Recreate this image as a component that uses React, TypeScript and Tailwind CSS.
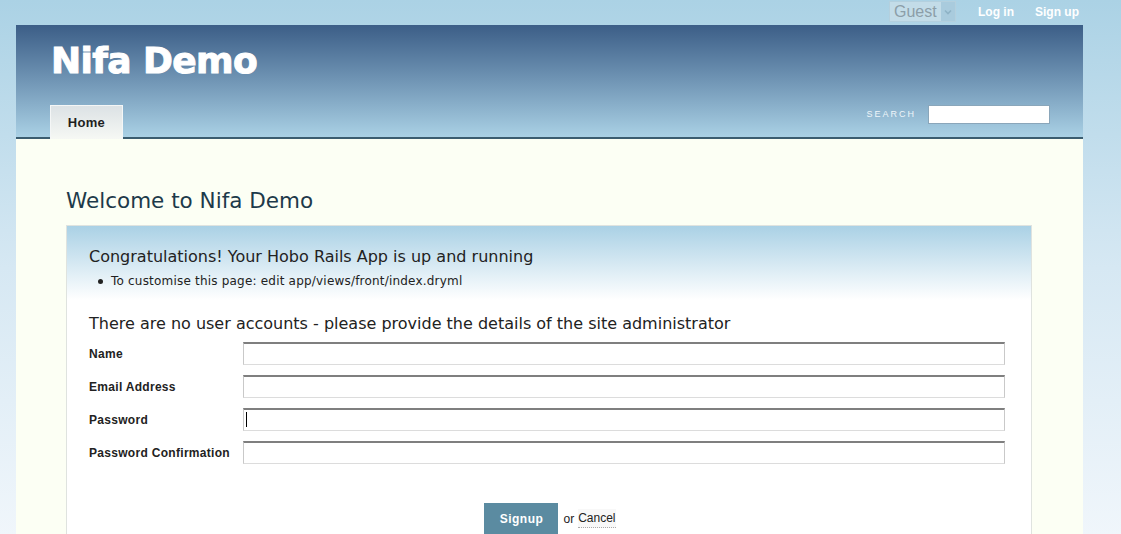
import React from "react";

const FIELDS = ["Name", "Email Address", "Password", "Password Confirmation"];

function Field({ label, focused }: { label: string; focused?: boolean }) {
  return (
    <div className="flex items-center h-[33px]">
      <label className="w-[154px] shrink-0 text-[12px] font-bold tracking-[0.3px] text-[#222]">{label}</label>
      <div className="relative flex-1 h-[23px] bg-white border border-[#c9c9c9] border-t-2 border-t-[#7f7f7f] border-b-[#dcdcdc]">
        {focused && <span className="absolute left-[2px] top-[2px] w-px h-[15px] bg-black" />}
      </div>
    </div>
  );
}

export default function App() {
  return (
    <div
      className="min-h-screen bg-gradient-to-b from-[#abd2e5] via-[#d6e8f3] to-[#f0f6fb]"
      style={{ fontFamily: '"Liberation Sans", Arial, sans-serif' }}
    >
      <div className="ml-[16px] w-[1067px]">
        {/* top bar */}
        <div className="h-[25px] flex items-start justify-end pr-[4px]">
          <div className="mt-[1px] flex items-center w-[67px] h-[21px] bg-[#c3dce8] border border-[#b4d0de]">
            <span className="flex-1 pl-[4px] text-[16px] leading-none text-[#8c9ea8]">Guest</span>
            <span className="w-[14px] h-[19px] bg-[#a9cbdd] flex items-center justify-center">
              <svg width="8" height="6" viewBox="0 0 8 6">
                <path d="M1 1.5 L4 4.5 L7 1.5" stroke="#8fb3c6" strokeWidth="1.6" fill="none" />
              </svg>
            </span>
          </div>
          <a className="ml-[22px] mt-[3px] text-[12px] font-bold text-white">Log in</a>
          <a className="ml-[21px] mt-[3px] text-[12px] font-bold text-white">Sign up</a>
        </div>

        {/* header */}
        <div className="h-[114px] bg-gradient-to-b from-[#3c5e87] to-[#aad1e5] border-b-2 border-[#3b5d70] flex flex-col">
          <h1
            className="pl-[35px] pt-[16px] text-[36px] leading-[40px] font-bold text-white tracking-[-0.6px] [-webkit-text-stroke:1px_white]"
            style={{ fontFamily: '"DejaVu Sans", Arial, sans-serif' }}
          >
            Nifa Demo
          </h1>
          <div className="mt-auto flex items-end justify-between">
            <div className="ml-[34px] -mb-[2px] w-[73px] h-[34px] bg-gradient-to-b from-[#dce2e5] to-[#f6f8f4] border border-b-0 border-[#f4f6f6] flex items-center justify-center">
              <span className="text-[13px] font-bold text-[#1f1f1f] tracking-[0.3px]">Home</span>
            </div>
            <div className="flex items-center mb-[13px] mr-[33px]">
              <span className="text-[9px] tracking-[2px] text-[#eef5f9] mr-[12px]">SEARCH</span>
              <div className="w-[122px] h-[19px] bg-white border border-[#8aa6ba]" />
            </div>
          </div>
        </div>

        {/* content */}
        <div className="bg-[#fcfff4] pl-[50px] pr-[51px] pt-[47px] h-[396px] overflow-hidden">
          <h2
            className="text-[21.5px] leading-[30px] text-[#1d3a4a] mb-[9px]"
            style={{ fontFamily: '"DejaVu Sans", sans-serif' }}
          >
            Welcome to Nifa Demo
          </h2>
          <div className="border border-[#dfe3df] bg-white">
            <div className="bg-gradient-to-b from-[#aad1e5] to-white pt-[20px] pb-[10px] pl-[22px]">
              <h3 className="text-[16px] leading-[22px] text-[#222]" style={{ fontFamily: '"DejaVu Sans", sans-serif' }}>
                Congratulations! Your Hobo Rails App is up and running
              </h3>
              <ul className="mt-[4px] pl-[9px] text-[12px] tracking-[0.2px] text-[#222]" style={{ fontFamily: '"DejaVu Sans", sans-serif' }}>
                <li className="flex items-center gap-[8px]">
                  <span className="w-[5px] h-[5px] rounded-full bg-[#222]" />
                  To customise this page: edit app/views/front/index.dryml
                </li>
              </ul>
            </div>
            <div className="pl-[22px] pr-[26px]">
              <h3 className="text-[16px] leading-[22px] text-[#222] mt-[13px] mb-[2px]" style={{ fontFamily: '"DejaVu Sans", sans-serif' }}>
                There are no user accounts - please provide the details of the site administrator
              </h3>
              {FIELDS.map((f) => (
                <Field key={f} label={f} focused={f === "Password"} />
              ))}
              <div className="flex items-center justify-center mt-[34px] pl-[6px]">
                <button className="w-[74px] h-[31px] bg-[#5b8ba1] text-white text-[12px] font-bold tracking-[0.5px]">Signup</button>
                <span className="ml-[5px] text-[12px] text-[#222]">or</span>
                <a className="ml-[4px] text-[12px] text-[#222] bg-[#f8f8f8] border-b border-dotted border-[#aaa]">Cancel</a>
              </div>
            </div>
          </div>
        </div>
      </div>
    </div>
  );
}
